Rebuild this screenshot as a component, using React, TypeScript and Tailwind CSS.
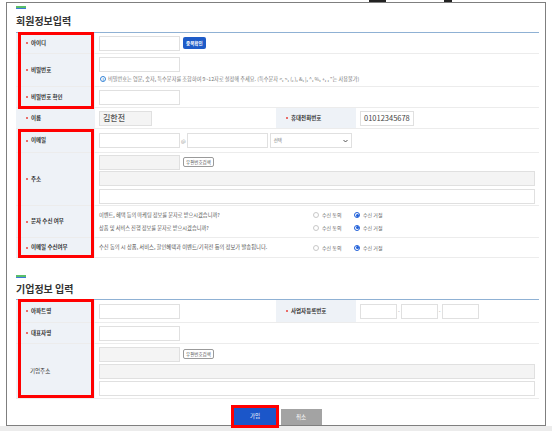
import React from "react";

const font = { fontFamily: '"Noto Sans CJK KR", "Noto Sans", sans-serif' };

function Req() {
  return <span className="mr-[3px] inline-block h-[2px] w-[2px] rounded-full bg-[#e8403a]" />;
}

function Label({ text, req = true, w = "w-[79px]" }: { text: string; req?: boolean; w?: string }) {
  return (
    <div className={`${w} flex shrink-0 items-center bg-[#eef2f7] pl-[10px] text-[5.5px] font-bold text-[#333]`}>
      {req && <Req />}
      <span className={req ? "" : "pl-[4px] font-normal"}>{text}</span>
    </div>
  );
}

function Input({ w = "w-[81px]", gray = false, children }: { w?: string; gray?: boolean; children?: React.ReactNode }) {
  return (
    <div
      className={`${w} flex h-[15px] shrink-0 items-center border border-[#e0e0e0] px-[3px] ${gray ? "bg-[#f4f4f4]" : "bg-white"}`}
    >
      {children}
    </div>
  );
}

function ZipButton() {
  return (
    <div className="ml-[3px] flex h-[10px] items-center rounded-[2px] border border-[#9a9a9a] bg-white px-[2px] text-[4.5px] text-[#555]">
      우편번호검색
    </div>
  );
}

function Radio({ on, text }: { on?: boolean; text: string }) {
  return (
    <div className="flex w-[41px] items-center gap-[3px]">
      {on ? (
        <span className="flex h-[6px] w-[6px] items-center justify-center rounded-full border border-[#1d5ed8] bg-white">
          <span className="h-[3px] w-[3px] rounded-full bg-[#1d5ed8]" />
        </span>
      ) : (
        <span className="h-[6px] w-[6px] rounded-full border border-[#c8c8c8] bg-white" />
      )}
      <span className="text-[5px] text-[#666]">{text}</span>
    </div>
  );
}

function Radios() {
  return (
    <div className="flex items-center">
      <Radio text="수신 동의" />
      <Radio on text="수신 거절" />
    </div>
  );
}

// box-sizing is border-box, so h includes the bottom separator
function Row({ h, children }: { h: string; children: React.ReactNode }) {
  return <div className={`${h} flex border-b border-[#ececec]`}>{children}</div>;
}

function Title({ text, h }: { text: string; h: string }) {
  return (
    <>
      <div className="flex w-[10px] flex-col">
        <div className="h-[2px] bg-[#5bbf6a]" />
        <div className="h-[1px] bg-[#3d7bd9]" />
      </div>
      <div className={`${h} flex items-center text-[10px] font-bold text-[#333]`}>{text}</div>
    </>
  );
}

export default function App() {
  return (
    <div className="relative flex h-[431px] w-[552px] flex-col overflow-hidden bg-white" style={font}>
      <div className="h-[2px] shrink-0" />
      <div className="mx-[6px] h-[424px] shrink-0 overflow-hidden border border-[#7f7f7f] bg-white pl-[9px] pr-[6px]">
        <div className="h-[3px]" />
        <Title text="회원정보입력" h="h-[23px]" />
        <div className="border-t border-[#8fb1d4]">
          <Row h="h-[21px]">
            <Label text="아이디" />
            <div className="flex flex-1 items-center pl-[4px]">
              <Input />
              <div className="ml-[3px] flex h-[12px] items-center rounded-[2px] bg-[#1f5cc8] px-[3px] text-[4.5px] font-bold text-white">
                중복확인
              </div>
            </div>
          </Row>
          <Row h="h-[33px]">
            <Label text="비밀번호" />
            <div className="flex flex-1 flex-col justify-center gap-[3px] pl-[4px]">
              <Input />
              <div className="flex items-center gap-[2px] pl-[1px]">
                <span className="flex h-[6px] w-[6px] items-center justify-center rounded-full border border-[#3a86d6] text-[4px] font-bold leading-none text-[#3a86d6]">
                  i
                </span>
                <span className="text-[5.2px] text-[#777]">
                  비밀번호는 영문, 숫자, 특수문자를 조합하여 9~12자로 설정해 주세요. (특수문자 &lt;, &gt;, (, ), &amp;, |, ^, %, +, , "는 사용불가)
                </span>
              </div>
            </div>
          </Row>
          <Row h="h-[21px]">
            <Label text="비밀번호 확인" />
            <div className="flex flex-1 items-center pl-[4px]">
              <Input />
            </div>
          </Row>
          <Row h="h-[21px]">
            <Label text="이름" />
            <div className="flex w-[181px] items-center pl-[4px]">
              <Input w="w-[53px]" gray>
                <span className="text-[8px] font-medium text-[#555]">김한전</span>
              </Input>
            </div>
            <Label text="휴대전화번호" w="w-[80px]" />
            <div className="flex flex-1 items-center pl-[4px]">
              <Input w="w-[54px]">
                <span className="text-[7.5px] text-[#444]">01012345678</span>
              </Input>
            </div>
          </Row>
          <Row h="h-[24px]">
            <Label text="이메일" />
            <div className="flex flex-1 items-center pl-[4px]">
              <Input />
              <span className="mx-[1px] text-[5px] text-[#888]">@</span>
              <Input />
              <div className="ml-[2px] flex h-[15px] w-[82px] items-center justify-between border border-[#e0e0e0] px-[3px]">
                <span className="text-[4.5px] text-[#777]">선택</span>
                <svg width="5" height="4" viewBox="0 0 10 8">
                  <path d="M1 2 L5 6 L9 2" fill="none" stroke="#444" strokeWidth="1.8" />
                </svg>
              </div>
            </div>
          </Row>
          <Row h="h-[53px]">
            <Label text="주소" />
            <div className="flex flex-1 flex-col justify-center gap-[1px] pl-[4px] pr-[4px]">
              <div className="flex items-center">
                <Input gray />
                <ZipButton />
              </div>
              <Input w="w-full" gray />
              <div className="h-[1px]" />
              <Input w="w-full" />
            </div>
          </Row>
          <Row h="h-[32px]">
            <Label text="문자 수신 여부" />
            <div className="flex flex-1 flex-col justify-center gap-[5px] pl-[4px]">
              <div className="flex items-center">
                <span className="w-[214px] text-[5.2px] text-[#555]">이벤트, 혜택 등의 마케팅 정보를 문자로 받으시겠습니까?</span>
                <Radios />
              </div>
              <div className="flex items-center">
                <span className="w-[214px] text-[5.2px] text-[#555]">상품 및 서비스 진행 정보를 문자로 받으시겠습니까?</span>
                <Radios />
              </div>
            </div>
          </Row>
          <Row h="h-[20px]">
            <Label text="이메일 수신여부" />
            <div className="flex flex-1 items-center pl-[4px]">
              <span className="w-[214px] text-[5.3px] text-[#555]">
                수신 동의 시 상품, 서비스, 할인혜택과 이벤트/기획전 등의 정보가 발송됩니다.
              </span>
              <Radios />
            </div>
          </Row>
        </div>

        <div className="h-[17px]" />
        <Title text="기업정보 입력" h="h-[21px]" />
        <div className="border-t border-[#8fb1d4]">
          <Row h="h-[23px]">
            <Label text="아파트명" />
            <div className="flex w-[181px] items-center pl-[4px]">
              <Input />
            </div>
            <Label text="사업자등록번호" w="w-[80px]" />
            <div className="flex flex-1 items-center pl-[4px]">
              <Input w="w-[37px]" />
              <span className="mx-[1px] text-[5px] text-[#888]">-</span>
              <Input w="w-[37px]" />
              <span className="mx-[1px] text-[5px] text-[#888]">-</span>
              <Input w="w-[37px]" />
            </div>
          </Row>
          <Row h="h-[21px]">
            <Label text="대표자명" />
            <div className="flex flex-1 items-center pl-[4px]">
              <Input />
            </div>
          </Row>
          <Row h="h-[55px]">
            <Label text="기업주소" req={false} />
            <div className="flex flex-1 flex-col justify-center gap-[2px] pl-[4px] pr-[4px]">
              <div className="flex items-center">
                <Input gray />
                <ZipButton />
              </div>
              <Input w="w-full" gray />
              <Input w="w-full" />
            </div>
          </Row>
        </div>

        <div className="mt-[8px] flex justify-center gap-[4px]">
          <div className="flex h-[18px] w-[43px] items-center justify-center bg-[#1b56c9] text-[5.5px] text-white">가입</div>
          <div className="mt-[2px] flex h-[16px] w-[41px] items-center justify-center bg-[#a3a3a3] text-[5.5px] text-white">
            취소
          </div>
        </div>
      </div>
      <div className="flex-1 bg-[#ececec]" />

      {/* red highlight boxes */}
      <div className="pointer-events-none absolute left-[18px] top-[32px] h-[77px] w-[76px] border-[3px] border-[#ff0000]" />
      <div className="pointer-events-none absolute left-[18px] top-[129px] h-[129px] w-[76px] border-[3px] border-[#ff0000]" />
      <div className="pointer-events-none absolute left-[18px] top-[299px] h-[99px] w-[76px] border-[3px] border-[#ff0000]" />
      <div className="pointer-events-none absolute left-[231px] top-[405px] h-[23px] w-[48px] border-[3px] border-[#ff0000]" />

      {/* cut-off marks at top edge */}
      <div className="absolute left-[369px] top-0 h-[2px] w-[17px] bg-[#222]" />
      <div className="absolute left-[444px] top-0 h-[2px] w-[8px] bg-[#222]" />
    </div>
  );
}
